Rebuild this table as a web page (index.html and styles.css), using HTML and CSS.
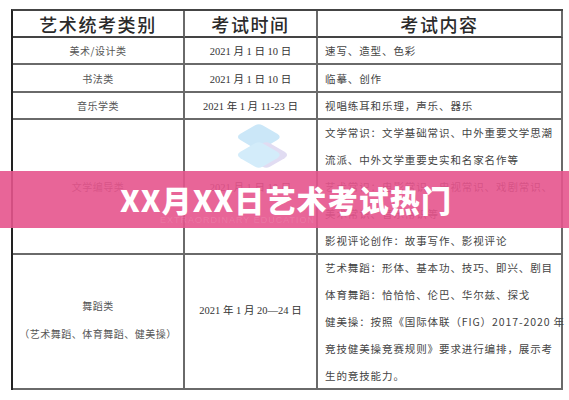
FILE: index.html
```html
<!DOCTYPE html>
<html lang="zh">
<head>
<meta charset="utf-8">
<link rel="stylesheet" href="styles.css">
</head>
<body>
<div class="page">
  <div class="exam">
    <div class="cell head">艺术统考类别</div>
    <div class="cell head">考试时间</div>
    <div class="cell head">考试内容</div>

    <div class="cell cat">美术/设计类</div>
    <div class="cell date">2021 月 1 日 10 日</div>
    <div class="cell content">速写、造型、色彩</div>

    <div class="cell cat">书法类</div>
    <div class="cell date">2021 月 1 日 10 日</div>
    <div class="cell content">临摹、创作</div>

    <div class="cell cat">音乐学类</div>
    <div class="cell date">2021 年 1 月 11-23 日</div>
    <div class="cell content">视唱练耳和乐理，声乐、器乐</div>

    <div class="cell cat">文学编导类</div>
    <div class="cell date">2021 月 1 日 10 日</div>
    <div class="cell content multi">
      <span>文学常识：文学基础常识、中外重要文学思潮</span>
      <span>流派、中外文学重要史实和名家名作等</span>
      <span>艺术常识：电影常识、电视常识、戏剧常识、</span>
      <span>美术常识、音乐常识等</span>
      <span>影视评论创作：故事写作、影视评论</span>
    </div>

    <div class="cell cat dance"><span>舞蹈类</span><span>（艺术舞蹈、体育舞蹈、健美操）</span></div>
    <div class="cell date up">2021 年 1 月 20—24 日</div>
    <div class="cell content multi">
      <span>艺术舞蹈：形体、基本功、技巧、即兴、剧目</span>
      <span>体育舞蹈：恰恰恰、伦巴、华尔兹、探戈</span>
      <span>健美操：按照《国际体联（FIG）2017-2020 年</span>
      <span>竞技健美操竞赛规则》要求进行编排，展示考</span>
      <span>生的竞技能力。</span>
    </div>
  </div>

  <svg class="logo" width="59" height="49" viewBox="9 0 48 46" preserveAspectRatio="none">
    <path d="M27 3 Q30 1 33 3 L45 11 Q49 14 45 17 L33 25 Q30 27 27 25 L15 17 Q11 14 15 11 Z" fill="#cbe7f8"/>
    <path d="M33 20 Q36 18 39 20 L51 28 Q55 31 51 34 L39 42 Q36 44 33 42 L21 34 Q17 31 21 28 Z" fill="#e1dcf2"/>
    <path d="M27 20 Q30 18 33 20 L45 28 Q49 31 45 34 L33 42 Q30 44 27 42 L15 34 Q11 31 15 28 Z" fill="#d3ecfa"/>
  </svg>

  <div class="banner">
    <span class="title">XX月XX日艺术考试热门</span>
    <span class="sub">EXTRAORDINARY EDUCATION</span>
  </div>
</div>
</body>
</html>
```
FILE: styles.css
```css
html, body {
  margin: 0;
  padding: 0;
  background: #ffffff;
}
.page {
  position: relative;
  width: 569px;
  height: 400px;
  overflow: hidden;
  padding: 9px 0 0 11px;
  box-sizing: border-box;
}
.exam {
  display: grid;
  grid-template-columns: 172px 133px 245px;
  grid-template-rows: 27px 27px 28px 27px 135px 135px;
  width: 552px;
  border-top: 2px solid #444;
  border-left: 2px solid #222;
  box-sizing: border-box;
  font-family: "Noto Sans CJK SC", sans-serif;
  color: #444;
}
.cell {
  border-right: 2px solid #6a6a6a;
  border-bottom: 2px solid #6a6a6a;
  display: flex;
  align-items: center;
  justify-content: center;
  overflow: visible;
  white-space: nowrap;
}
.head {
  font-weight: 500;
  font-size: 18px;
  letter-spacing: 1.6px;
  color: #2a2a2a;
  border-bottom-color: #444;
}
.cat {
  font-size: 10px;
  letter-spacing: 0.5px;
  color: #555;
}
.date {
  font-family: "Liberation Serif", "Noto Sans CJK SC", serif;
  font-size: 10.5px;
  color: #333;
}
.content {
  justify-content: flex-start;
  padding-left: 7px;
  font-size: 10.5px;
  letter-spacing: 0.9px;
  color: #444;
}
.multi {
  flex-direction: column;
  align-items: flex-start;
  justify-content: center;
}
.multi span {
  display: block;
  line-height: 27px;
}
.dance {
  flex-direction: column;
  padding-bottom: 4px;
}
.dance span {
  display: block;
  line-height: 28px;
}
.up {
  padding-bottom: 24px;
}
.logo {
  position: absolute;
  left: 233px;
  top: 122px;
}
.banner {
  position: absolute;
  left: 0;
  top: 171px;
  width: 569px;
  height: 57px;
  background: rgba(229, 84, 141, 0.9);
}
.title {
  position: absolute;
  left: 120px;
  top: 12px;
  font-family: "Noto Sans CJK SC", sans-serif;
  font-weight: 900;
  font-size: 30px;
  letter-spacing: 1.1px;
  line-height: 32px;
  color: #ffffff;
  white-space: nowrap;
}
.sub {
  position: absolute;
  left: 160px;
  top: 44px;
  font-family: "Liberation Sans", sans-serif;
  font-size: 9px;
  letter-spacing: 1px;
  color: rgba(255, 255, 255, 0.12);
  white-space: nowrap;
}
```
